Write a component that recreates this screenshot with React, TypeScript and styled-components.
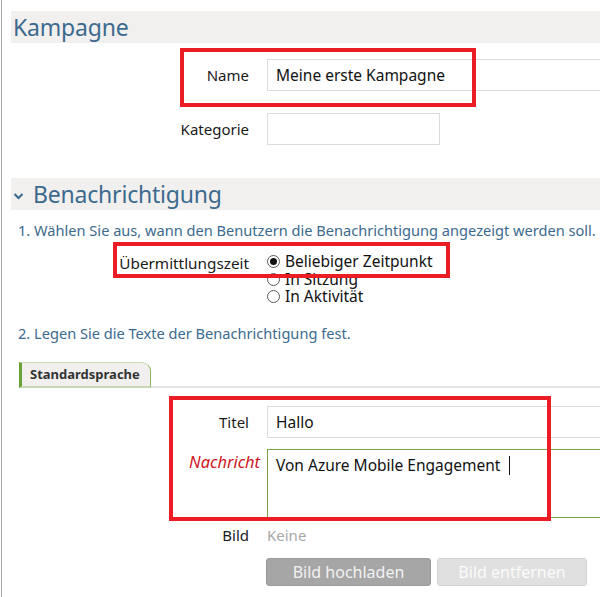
import React from "react";
import styled, { createGlobalStyle } from "styled-components";

const GlobalStyle = createGlobalStyle`
  html, body {
    margin: 0;
    padding: 0;
    background: #ffffff;
    overflow: hidden;
    width: 600px;
    height: 597px;
  }
  body {
    font-family: "Noto Sans", "Open Sans", sans-serif;
    color: #1a1a1a;
  }
`;

const Page = styled.div`
  position: relative;
  margin-left: 1px;
  border-left: 1px solid #a6a6a6;
  padding: 11px 0 0 9px;
  height: 597px;
  box-sizing: border-box;
  overflow: hidden;
`;

const SectionHeader = styled.h2<{ $top?: number }>`
  margin: ${(p) => p.$top ?? 0}px 0 0 0;
  height: 32px;
  background: #f1f0ef;
  display: flex;
  align-items: center;
  gap: 9px;
  padding-left: 2px;
  font-weight: 400;
  font-size: 23px;
  color: #3c6a8e;
  letter-spacing: -0.2px;
  white-space: nowrap;
`;

const Chevron = styled.svg`
  width: 11px;
  height: 8px;
  margin-top: 3px;
  flex: none;
`;

const FormGrid = styled.div<{ $top: number; $gap: number }>`
  display: grid;
  grid-template-columns: 238px 1fr;
  column-gap: 18px;
  row-gap: ${(p) => p.$gap}px;
  margin-top: ${(p) => p.$top}px;
  align-items: center;
`;

const Label = styled.label<{ $note?: boolean; $top?: boolean; $tight?: boolean }>`
  text-align: right;
  font-size: ${(p) => (p.$note ? "16.4px" : "15px")};
  line-height: ${(p) => (p.$tight ? "13px" : "20px")};
  white-space: nowrap;
  color: ${(p) => (p.$note ? "#d0141e" : "#1a1a1a")};
  font-style: ${(p) => (p.$note ? "italic" : "normal")};
  margin-right: ${(p) => (p.$note ? "-11px" : "0")};
  align-self: ${(p) => (p.$top ? "start" : "center")};
  padding-top: ${(p) => (p.$top ? "3px" : "0")};
`;

const TextInput = styled.div<{ $w: number; $h?: number; $green?: boolean }>`
  box-sizing: border-box;
  width: ${(p) => p.$w}px;
  height: ${(p) => p.$h ?? 32}px;
  border: 1px solid ${(p) => (p.$green ? "#79a548" : "#dcdcdc")};
  background: #fff;
  padding: 0 8px;
  font-size: 15.5px;
  color: #111;
  display: flex;
  align-items: ${(p) => (p.$h ? "flex-start" : "center")};
  padding-top: ${(p) => (p.$h ? "4px" : "0")};
  white-space: nowrap;
`;

const Caret = styled.span`
  display: inline-block;
  width: 1px;
  height: 19px;
  background: #111;
  margin-left: 9px;
  margin-top: 2px;
`;

const Instruction = styled.p<{ $top: number }>`
  margin: ${(p) => p.$top}px 0 0 7px;
  font-size: 14.6px;
  line-height: 20px;
  color: #3c6a8e;
  white-space: nowrap;
`;

const RadioRow = styled.div`
  display: grid;
  grid-template-columns: 238px 1fr;
  column-gap: 18px;
  margin-top: 13px;
`;

const RadioLabel = styled.span`
  text-align: right;
  font-size: 15.3px;
  line-height: 17px;
  margin-top: 2px;
  white-space: nowrap;
`;

const RadioList = styled.div`
  display: flex;
  flex-direction: column;
`;

const RadioOption = styled.div`
  display: flex;
  align-items: center;
  gap: 5px;
  font-size: 15.5px;
  line-height: 17.5px;
  color: #111;
  white-space: nowrap;
`;

const RadioCircle = styled.span<{ $on?: boolean }>`
  box-sizing: border-box;
  width: 13px;
  height: 13px;
  border-radius: 50%;
  border: 1px solid #5a5a5a;
  background: #fff;
  display: flex;
  align-items: center;
  justify-content: center;
  flex: none;
  &::after {
    content: "";
    width: 7px;
    height: 7px;
    border-radius: 50%;
    background: ${(p) => (p.$on ? "#111" : "transparent")};
  }
`;

const TabBar = styled.div`
  margin: 19px 0 0 8px;
  border-bottom: 2px solid #e4e4e4;
  display: flex;
`;

const Tab = styled.div`
  box-sizing: border-box;
  height: 26px;
  margin-bottom: -2px;
  padding: 0 10px 0 8px;
  background: #f1f0ef;
  border-left: 3px solid #6aa136;
  border-top: 1px solid #c9dab6;
  border-right: 1px solid #8ab85e;
  border-bottom: 2px solid #c6d6b4;
  border-top-right-radius: 9px;
  display: flex;
  align-items: center;
  font-weight: 700;
  font-size: 13px;
  color: #333;
`;

const Muted = styled.span`
  font-size: 15px;
  line-height: 13px;
  color: #a8a8a8;
`;

const ButtonRow = styled.div`
  display: flex;
  gap: 6px;
  margin-left: -1px;
  margin-top: 5px;
`;

const Button = styled.button<{ $w: number; $dim?: boolean }>`
  box-sizing: border-box;
  width: ${(p) => p.$w}px;
  height: 28px;
  border-radius: 3px;
  border: 1px solid ${(p) => (p.$dim ? "#d3d3d3" : "#9a9a9a")};
  background: ${(p) => (p.$dim ? "#e0e0e0" : "#a6a6a6")};
  color: ${(p) => (p.$dim ? "#fbfbfb" : "#f2f2f2")};
  font-family: inherit;
  font-size: 16px;
  padding: 0;
  cursor: default;
`;

const Highlight = styled.div<{ $x: number; $y: number; $w: number; $h: number }>`
  position: absolute;
  left: ${(p) => p.$x}px;
  top: ${(p) => p.$y}px;
  width: ${(p) => p.$w}px;
  height: ${(p) => p.$h}px;
  box-sizing: border-box;
  border: 4px solid #ec1c24;
  pointer-events: none;
`;

export default function App() {
  return (
    <>
      <GlobalStyle />
      <Page>
        <SectionHeader>Kampagne</SectionHeader>
        <FormGrid $top={16} $gap={22}>
          <Label>Name</Label>
          <TextInput $w={360}>Meine erste Kampagne</TextInput>
          <Label>Kategorie</Label>
          <TextInput $w={173} />
        </FormGrid>

        <SectionHeader $top={33}>
          <Chevron viewBox="0 0 11 8">
            <path d="M1.5 2 L5.5 6 L9.5 2" fill="none" stroke="#3c6a8e" strokeWidth="2" />
          </Chevron>
          Benachrichtigung
        </SectionHeader>

        <Instruction $top={10}>
          1. Wählen Sie aus, wann den Benutzern die Benachrichtigung angezeigt werden soll.
        </Instruction>

        <RadioRow>
          <RadioLabel>Übermittlungszeit</RadioLabel>
          <RadioList>
            <RadioOption>
              <RadioCircle $on />
              Beliebiger Zeitpunkt
            </RadioOption>
            <RadioOption>
              <RadioCircle />
              In Sitzung
            </RadioOption>
            <RadioOption>
              <RadioCircle />
              In Aktivität
            </RadioOption>
          </RadioList>
        </RadioRow>

        <Instruction $top={17}>2. Legen Sie die Texte der Benachrichtigung fest.</Instruction>

        <TabBar>
          <Tab>Standardsprache</Tab>
        </TabBar>

        <FormGrid $top={18} $gap={11}>
          <Label>Titel</Label>
          <TextInput $w={360}>Hallo</TextInput>
          <Label $note $top>
            Nachricht
          </Label>
          <TextInput $w={360} $h={69} $green>
            Von Azure Mobile Engagement
            <Caret />
          </TextInput>
          <Label $tight>Bild</Label>
          <Muted>Keine</Muted>
          <span />
          <ButtonRow>
            <Button $w={165}>Bild hochladen</Button>
            <Button $w={150} $dim>
              Bild entfernen
            </Button>
          </ButtonRow>
        </FormGrid>

        <Highlight $x={178} $y={48} $w={296} $h={59} />
        <Highlight $x={111} $y={242} $w={337} $h={36} />
        <Highlight $x={167} $y={396} $w={382} $h={125} />
      </Page>
    </>
  );
}
